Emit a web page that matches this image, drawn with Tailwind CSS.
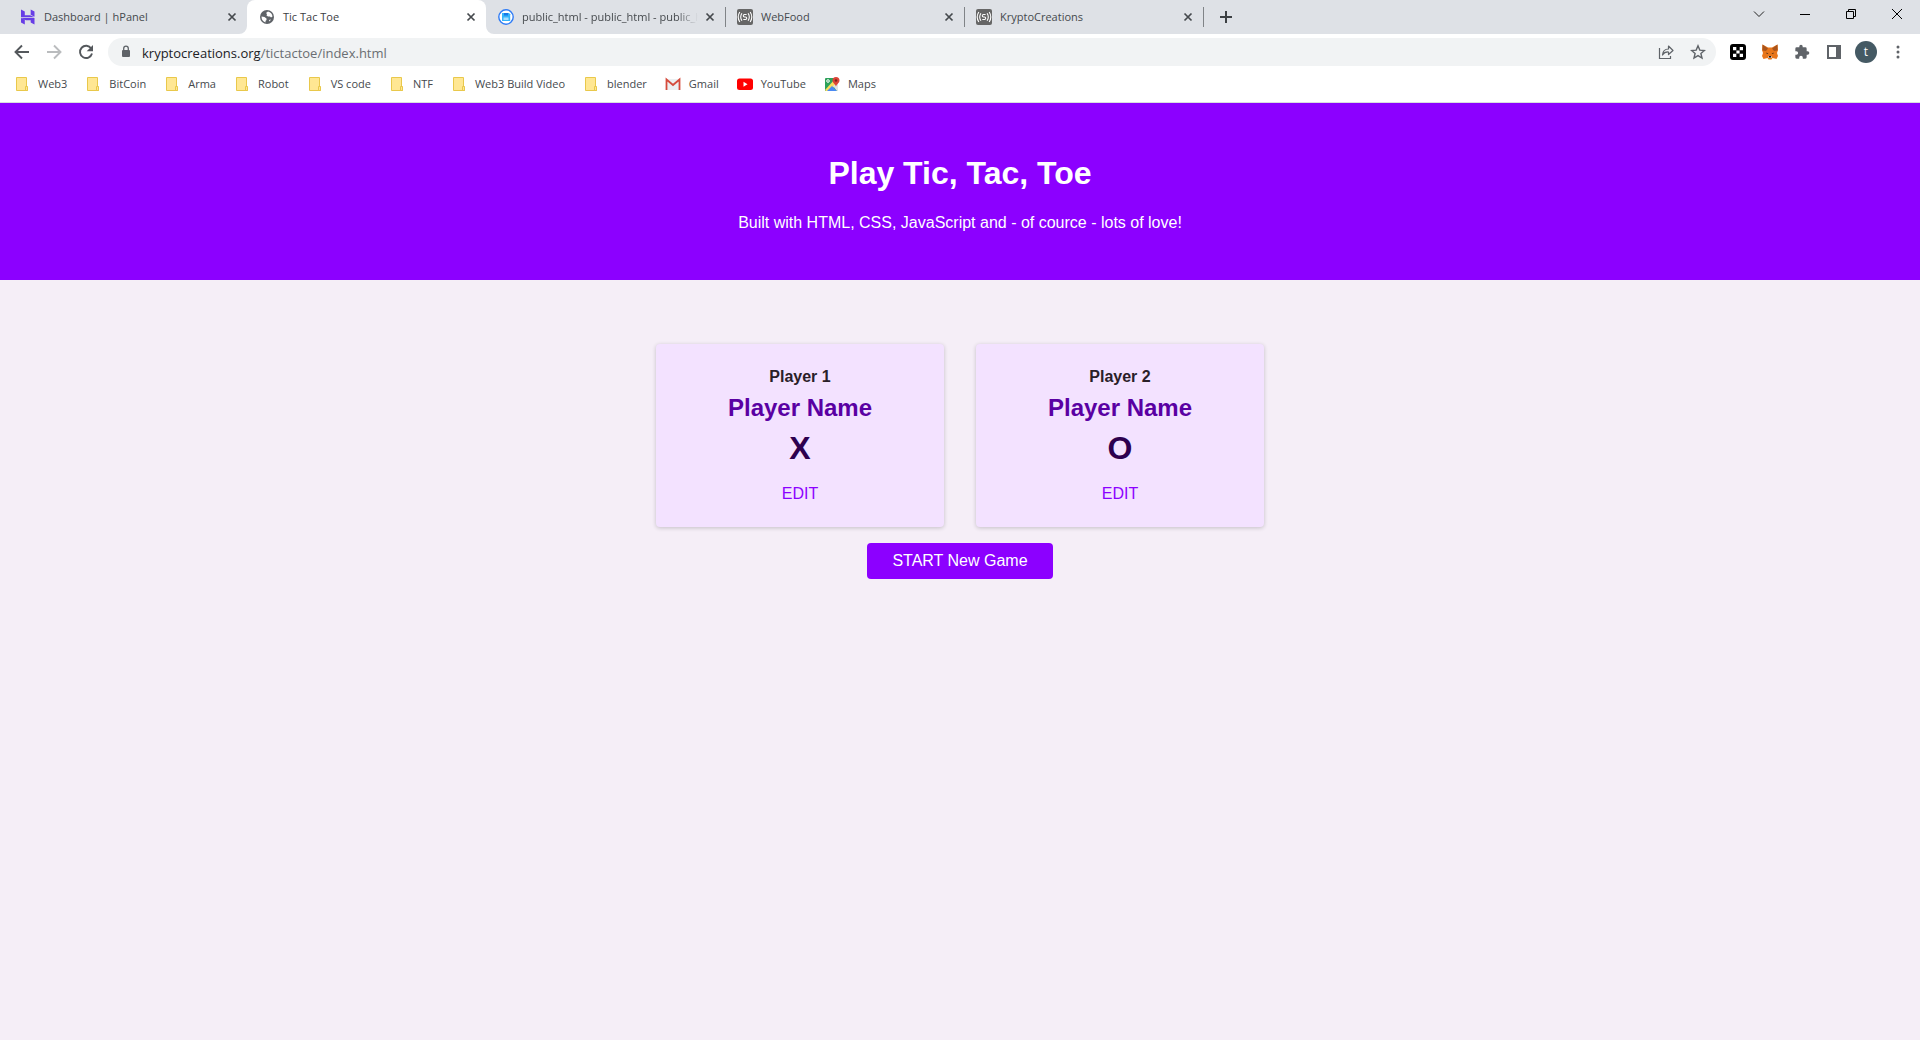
<!DOCTYPE html>
<html lang="en">
<head>
    <meta charset="UTF-8">
    <meta name="viewport" content="width=device-width, initial-scale=1.0">
    <title>Tic Tac Toe</title>
    <script src="https://cdn.jsdelivr.net/npm/@tailwindcss/browser@4"></script>
</head>
<body class="min-h-screen bg-[#f5eef7] font-['Liberation_Sans',Arial,sans-serif] text-[#2a2028]">

    <!-- Shared icons -->
    <svg class="hidden">
        <symbol id="close" viewBox="0 0 16 16"><path d="M4.5 4.5l7 7M11.500 4.500l-7 7" stroke="#45494d" stroke-width="1.700" fill="none"/></symbol>
        <symbol id="folder" viewBox="0 0 16 16"><path d="M2.500 1.500h10v9.500h1v3.500h-11z" fill="#ffe793" stroke="#e9c84b"/><path d="M11.500 14.500v-4h2v4z" fill="#ffe793" stroke="#e9c84b"/></symbol>
        <symbol id="signal" viewBox="0 0 16 16">
            <rect width="16" height="16" rx="2" fill="#666"/>
            <path d="M2.800 3q-3.200 5 0 10M4.900 4.200q-2.400 3.800 0 7.600M13.200 3q3.200 5 0 10M11.100 4.200q2.400 3.800 0 7.600" stroke="#fff" stroke-width="1.100" fill="none"/>
            <path d="M9.600 5.500H7.500q-1.200 0-1.200 1.200T7.500 8h1q1.200 0 1.200 1.200t-1.200 1.300H6.300" stroke="#fff" stroke-width="1.100" fill="none"/>
        </symbol>
    </svg>

    <div class="bg-white font-['Open_Sans','Noto_Sans',sans-serif] border-b border-[#dadce0]">
        <!-- Tab strip -->
        <div class="flex h-[34px] bg-[#dee1e6] pl-2 text-[11px] text-[#45494d]">
            <div class="flex items-center w-[239px] px-3 gap-2">
                <svg class="size-4 shrink-0" viewBox="0 0 16 16" fill="#673de6"><path d="M1 .5l3.800 2v3.700h5.400l4.300 2.100H1zM10.700.5l3.800 2v5.200l-3.800-1.900zM1 9l3.800 1.800v4.700L1 13.500zM1.500 9h13v6.500l-3.800-2v-2.300H6z"/></svg>
                <span class="flex-1 whitespace-nowrap">Dashboard | hPanel</span>
                <button aria-label="Close tab" class="-mr-[5px]"><svg class="size-4"><use href="#close"/></svg></button>
            </div>
            <div class="relative flex items-center w-[239px] px-3 gap-2 rounded-t-lg bg-white text-[#3c4043]">
                <svg class="absolute bottom-0 -left-2 size-2" viewBox="0 0 8 8"><path d="M8 0v8H0a8 8 0 0 0 8-8z" fill="#fff"/></svg>
                <svg class="absolute bottom-0 -right-2 size-2" viewBox="0 0 8 8"><path d="M0 0v8h8a8 8 0 0 1-8-8z" fill="#fff"/></svg>
                <svg class="size-4 shrink-0" viewBox="0 0 16 16"><circle cx="8" cy="8" r="7" fill="#5f6368"/><path d="M2.500 7.500l3 .5 2 1.500v1.500l-1 1v1.500q-4-1.500-4-6zM9 2.500q4 1 4.500 5l-1.500 1-1-1H9l-1.500-1L8 5l-1-1zM10 11l2-.5-1.500 2z" fill="#fff"/></svg>
                <span class="flex-1 whitespace-nowrap">Tic Tac Toe</span>
                <button aria-label="Close tab" class="-mr-[5px]"><svg class="size-4"><use href="#close"/></svg></button>
            </div>
            <div class="relative flex items-center w-[239px] px-3 gap-2">
                <svg class="size-4 shrink-0" viewBox="0 0 16 16"><circle cx="8" cy="8" r="7.200" fill="#fff" stroke="#2f7cf6" stroke-width="1.400"/><path d="M4 4h7l1.200 1.200V12H4z" fill="#35b3fa"/><path d="M6 4h4v2.500H6z" fill="#1678e8"/><path d="M5.500 8.500h5v2.500h-5z" fill="#a5dcff"/></svg>
                <span class="flex-1 whitespace-nowrap overflow-hidden -mr-1 mask-r-from-88%">public_html - public_html - public_html</span>
                <button aria-label="Close tab" class="-mr-[5px]"><svg class="size-4"><use href="#close"/></svg></button>
                <span class="absolute -right-px top-[7px] h-5 w-px bg-[#808387]"></span>
            </div>
            <div class="relative flex items-center w-[239px] px-3 gap-2">
                <svg class="size-4 shrink-0"><use href="#signal"/></svg>
                <span class="flex-1 whitespace-nowrap">WebFood</span>
                <button aria-label="Close tab" class="-mr-[5px]"><svg class="size-4"><use href="#close"/></svg></button>
                <span class="absolute -right-px top-[7px] h-5 w-px bg-[#808387]"></span>
            </div>
            <div class="relative flex items-center w-[239px] px-3 gap-2">
                <svg class="size-4 shrink-0"><use href="#signal"/></svg>
                <span class="flex-1 whitespace-nowrap">KryptoCreations</span>
                <button aria-label="Close tab" class="-mr-[5px]"><svg class="size-4"><use href="#close"/></svg></button>
                <span class="absolute -right-px top-[7px] h-5 w-px bg-[#808387]"></span>
            </div>
            <button aria-label="New tab" class="w-[46px] flex items-center justify-center">
                <svg class="size-4" viewBox="0 0 16 16"><path d="M8 2v12M2 8h12" stroke="#3c4043" stroke-width="2"/></svg>
            </button>
            <div class="ml-auto flex h-7">
                <button aria-label="Search tabs" class="w-[46px] flex items-center justify-center"><svg class="size-3" viewBox="0 0 12 12"><path d="M1 3.500l5 5 5-5" fill="none" stroke="#222"/></svg></button>
                <button aria-label="Minimize" class="w-[46px] flex items-center justify-center"><svg class="size-3" viewBox="0 0 12 12"><path d="M1 6.500h10" stroke="#000"/></svg></button>
                <button aria-label="Restore" class="w-[46px] flex items-center justify-center"><svg class="size-3" viewBox="0 0 12 12"><path d="M1.500 3.500h7v7h-7zM3.500 3.500v-2h7v7h-2" fill="none" stroke="#000"/></svg></button>
                <button aria-label="Close" class="w-[46px] flex items-center justify-center"><svg class="size-3" viewBox="0 0 12 12"><path d="M1 1l10 10M11 1L1 11" stroke="#000"/></svg></button>
            </div>
        </div>

        <!-- Toolbar -->
        <div class="flex items-center h-9 px-[6px] gap-[6px]">
            <div class="flex">
                <button aria-label="Back" class="w-8 flex justify-center"><svg class="size-4" viewBox="0 0 16 16"><path d="M15 8H2M8 1.500L1.500 8 8 14.500" fill="none" stroke="#54585c" stroke-width="1.900"/></svg></button>
                <button aria-label="Forward" class="w-8 flex justify-center"><svg class="size-4" viewBox="0 0 16 16"><path d="M1 8h13M8 1.500L14.500 8 8 14.500" fill="none" stroke="#babcbe" stroke-width="1.900"/></svg></button>
                <button aria-label="Reload" class="w-8 flex justify-center"><svg class="size-4" viewBox="0 0 16 16"><path d="M13.200 4.500A6.100 6.100 0 1 0 14 9.500" fill="none" stroke="#54585c" stroke-width="1.900"/><path d="M15 1v6.300H8.700z" fill="#54585c"/></svg></button>
            </div>
            <div class="flex flex-1 items-center h-7 rounded-full bg-[#f1f3f4] pl-3 pr-[2px]">
                <svg class="w-3 h-4 mr-[10px] shrink-0" viewBox="0 0 12 16"><rect x="2" y="6" width="8" height="7" rx="1" fill="#5f6368"/><path d="M3.700 6.500V4.500a2.300 2.300 0 0 1 4.600 0v2" fill="none" stroke="#5f6368" stroke-width="1.300"/></svg>
                <span class="flex-1 pt-px text-[13px] leading-5 text-[#6a6e72]"><span class="text-[#202124]">kryptocreations.org</span>/tictactoe/index.html</span>
                <button aria-label="Share" class="w-8 flex justify-center"><svg class="size-4" viewBox="0 0 16 16"><path d="M1.500 4v10.500h11V12" fill="none" stroke="#5f6368" stroke-width="1.200"/><path d="M4.500 11q.5-6 6-6V2L15 6.500 10.500 10.500V8q-4-.3-6 3z" fill="none" stroke="#5f6368" stroke-width="1.200" stroke-linejoin="round"/></svg></button>
                <button aria-label="Bookmark this tab" class="w-8 flex justify-center"><svg class="size-4" viewBox="0 0 16 16"><path d="M8 1.800l1.800 4.300 4.600.4-3.500 3 1.100 4.500L8 11.600 4 14l1.100-4.500-3.500-3 4.600-.4z" fill="none" stroke="#5f6368" stroke-width="1.400"/></svg></button>
            </div>
            <div class="flex items-center">
                <button aria-label="OKX Wallet" class="w-8 flex justify-center"><svg class="size-4" viewBox="0 0 16 16"><rect width="16" height="16" rx="3" fill="#000"/><path d="M3 3h3.300v3.300H3zM9.700 3H13v3.300H9.700zM6.400 6.400h3.200v3.200H6.400zM3 9.700h3.300V13H3zM9.700 9.700H13V13H9.700z" fill="#fff"/></svg></button>
                <button aria-label="MetaMask" class="w-8 flex justify-center"><svg class="size-4" viewBox="0 0 16 16"><path d="M.5.500L6 3.500h4L15.500.500 16 6l-1 3 1 3-1.500 3-4-1-1 1.500h-3l-1-1.500-4 1L0 12l1-3-1-3z" fill="#e8761b"/><path d="M.5.500L6 4.500 4 7 .5 6.500zM15.500.500L10 4.500 12 7l3.500-.5z" fill="#a9541b"/><path d="M4 8.500l2.500 1.200L5 10zM12 8.500L9.500 9.700 11 10z" fill="#3a2415"/><path d="M6.500 12h3l.5 2H6z" fill="#d7c1b3"/><path d="M7 12h2v1.500H7z" fill="#161616"/></svg></button>
                <button aria-label="Extensions" class="w-8 flex justify-center"><svg class="size-4" viewBox="0 0 24 24"><path d="M20.500 11H19V7a2 2 0 0 0-2-2h-4V3.500a2.500 2.500 0 0 0-5 0V5H4a2 2 0 0 0-2 2v3.800h1.500a2.700 2.700 0 0 1 0 5.400H2V20a2 2 0 0 0 2 2h3.800v-1.500a2.700 2.700 0 0 1 5.400 0V22H17a2 2 0 0 0 2-2v-4h1.500a2.500 2.500 0 0 0 0-5z" fill="#5f6368"/></svg></button>
                <button aria-label="Side panel" class="w-8 flex justify-center"><svg class="size-4" viewBox="0 0 16 16"><path d="M1 1h14v14H1zM3 3v10h7V3z" fill="#5f6368" fill-rule="evenodd"/></svg></button>
                <button aria-label="Profile" class="w-8 flex justify-center"><span class="size-[22px] rounded-full bg-[#455a64] text-white text-xs leading-[21px]">t</span></button>
                <button aria-label="Menu" class="w-8 flex justify-center"><svg class="size-4" viewBox="0 0 16 16" fill="#5f6368"><circle cx="8" cy="3" r="1.500"/><circle cx="8" cy="8" r="1.500"/><circle cx="8" cy="13" r="1.500"/></svg></button>
            </div>
        </div>

        <!-- Bookmarks bar -->
        <div class="flex items-center h-7 mb-1 pl-[14px] gap-[18px] text-[11px] text-[#45494d] whitespace-nowrap">
            <a href="#" class="flex items-center gap-2"><svg class="size-4"><use href="#folder"/></svg>Web3</a>
            <a href="#" class="flex items-center gap-2"><svg class="size-4"><use href="#folder"/></svg>BitCoin</a>
            <a href="#" class="flex items-center gap-2"><svg class="size-4"><use href="#folder"/></svg>Arma</a>
            <a href="#" class="flex items-center gap-2"><svg class="size-4"><use href="#folder"/></svg>Robot</a>
            <a href="#" class="flex items-center gap-2"><svg class="size-4"><use href="#folder"/></svg>VS code</a>
            <a href="#" class="flex items-center gap-2"><svg class="size-4"><use href="#folder"/></svg>NTF</a>
            <a href="#" class="flex items-center gap-2"><svg class="size-4"><use href="#folder"/></svg>Web3 Build Video</a>
            <a href="#" class="flex items-center gap-2"><svg class="size-4"><use href="#folder"/></svg>blender</a>
            <a href="#" class="flex items-center gap-2"><svg class="size-4" viewBox="0 0 16 16"><path d="M1 3h14v11H1z" fill="#eceff1"/><path d="M1.500 14V3.500L8 9l6.500-5.500V14" fill="none" stroke="#d54b3d" stroke-width="1.800"/></svg>Gmail</a>
            <a href="#" class="flex items-center gap-2"><svg class="size-4" viewBox="0 0 16 16"><rect y="2.500" width="16" height="11.500" rx="2.500" fill="#f00"/><path d="M6.500 5.800v5l4-2.500z" fill="#fff"/></svg>YouTube</a>
            <a href="#" class="flex items-center gap-2"><svg class="size-4" viewBox="0 0 16 16"><rect x="1" y="2" width="13" height="13" rx="1" fill="#2da15a"/><path d="M1 14L11 3l3 1v3L6 15H2z" fill="#fbdc5c"/><path d="M3 15l5-5 5 5z" fill="#4a89f3"/><path d="M9 10l5-4v9h-1z" fill="#dfe3e6"/><circle cx="4" cy="5" r="1.300" fill="none" stroke="#fff"/><path d="M12 1a3.500 3.500 0 0 1 3.500 3.500c0 2.500-2.800 3.500-3.500 6-.7-2.500-3.500-3.500-3.500-6A3.500 3.500 0 0 1 12 1z" fill="#dc4437"/><circle cx="12" cy="4.500" r="1.200" fill="#7b231c"/></svg>Maps</a>
        </div>
    </div>

    <!-- Page -->
    <header class="bg-[#8c00ff] text-white text-center pt-[52px] pb-12">
        <h1 class="text-[32px] leading-[37px] font-bold mb-[22px]">Play Tic, Tac, Toe</h1>
        <p class="text-base leading-[18px]">Built with HTML, CSS, JavaScript and - of cource - lots of love!</p>
    </header>

    <main class="pt-16 text-center">
        <section class="flex justify-center gap-8">
            <article class="w-72 rounded bg-[#f3e2ff] py-6 shadow-[0_1px_4px_rgba(0,0,0,0.2)]">
                <h2 class="text-base leading-[18px] font-bold">Player 1</h2>
                <p class="mt-2 text-2xl leading-[28px] font-bold text-[#5a00a3]">Player Name</p>
                <p class="mt-2 mb-[18px] text-[32px] leading-[37px] font-bold text-[#2d004f]">X</p>
                <button class="block mx-auto text-base leading-[18px] text-[#8c00ff]">EDIT</button>
            </article>
            <article class="w-72 rounded bg-[#f3e2ff] py-6 shadow-[0_1px_4px_rgba(0,0,0,0.2)]">
                <h2 class="text-base leading-[18px] font-bold">Player 2</h2>
                <p class="mt-2 text-2xl leading-[28px] font-bold text-[#5a00a3]">Player Name</p>
                <p class="mt-2 mb-[18px] text-[32px] leading-[37px] font-bold text-[#2d004f]">O</p>
                <button class="block mx-auto text-base leading-[18px] text-[#8c00ff]">EDIT</button>
            </article>
        </section>
        <button class="mt-4 h-9 px-[25px] rounded bg-[#8c00ff] text-base leading-[18px] text-white">START New Game</button>
    </main>

</body>
</html>
